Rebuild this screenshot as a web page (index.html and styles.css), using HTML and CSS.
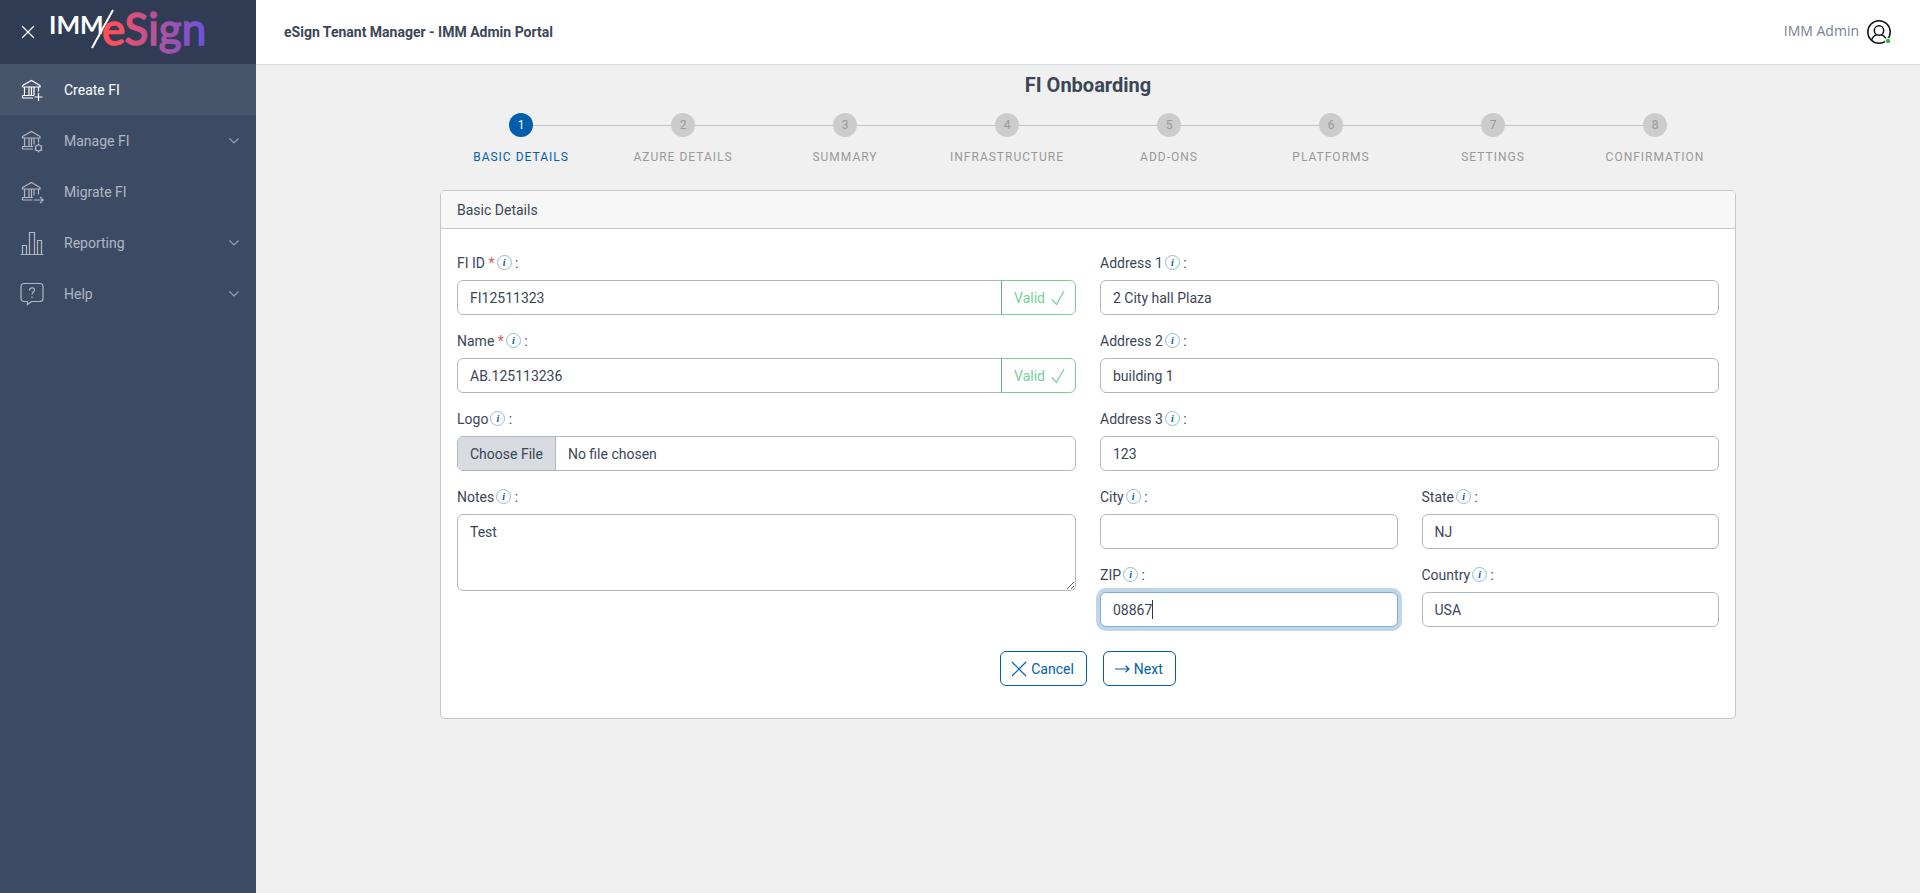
FILE: index.html
```html
<!DOCTYPE html>
<html lang="en">
<head>
	<meta charset="UTF-8" />
	<meta name="viewport" content="width=device-width, initial-scale=1.0" />
	<title>eSign Tenant Manager - IMM Admin Portal</title>
	<link rel="stylesheet" href="styles.css">
</head>
<body>
	<!-- Sidebar -->
	<aside class="sidebar">
		<div class="sidebar-brand">
			<button type="button" class="sidebar-toggle" aria-label="Close menu">
				<svg width="14" height="14" viewBox="0 0 14 14"><path d="M1 1l12 12M13 1L1 13" /></svg>
			</button>
			<svg class="logo" width="170" height="64" viewBox="0 0 170 64">
				<defs>
					<linearGradient id="brand" gradientUnits="userSpaceOnUse" x1="54" y1="0" x2="156" y2="0">
						<stop offset="0.1" stop-color="#ff4f58" />
						<stop offset="0.5" stop-color="#b9529b" />
						<stop offset="1" stop-color="#6a52dc" />
					</linearGradient>
				</defs>
				<text class="logo-imm" x="0" y="34">IMM</text>
				<path class="logo-slash" d="M64 10L43 48" />
				<text class="logo-esign" x="53" y="45" fill="url(#brand)" stroke="url(#brand)">eSign</text>
			</svg>
		</div>
		<nav class="sidebar-nav">
			<a href="#create" class="nav-link active">
				<svg class="nav-icon" viewBox="0 0 24 24">
					<path d="M2.500 7.500L11.500 2.500l8.500 5v1.500h-17.500zM4.500 9.500v8M9 9.500v8M11.500 9.500v8M14 9.500v8M18.500 9.500v4M2.500 17.500h11.500M2.500 20h10.500M2.500 17.500V20M18.500 15v8M14.500 19h8" />
				</svg>
				<span>Create FI</span>
			</a>
			<a href="#manage" class="nav-link">
				<svg class="nav-icon" viewBox="0 0 24 24">
					<path d="M2.500 7.500L11.500 2.500l8.500 5v1.500h-17.500zM4.500 9.500v8M9 9.500v8M11.500 9.500v8M14 9.500v6M18.500 9.500v4M2.500 17.500h10.500M2.500 20h10.500M2.500 17.500V20" />
					<circle cx="18.500" cy="19" r="3" />
					<path d="M18.500 14.500v1.500M18.500 22v1.500M14.600 16.700l1.300.8M21.100 20.500l1.300.8M14.600 21.300l1.300-.8M21.100 17.500l1.300-.8" />
				</svg>
				<span>Manage FI</span>
				<svg class="chevron" viewBox="0 0 12 8"><path d="M1.500 1.500L6 6l4.500-4.500" /></svg>
			</a>
			<a href="#migrate" class="nav-link">
				<svg class="nav-icon" viewBox="0 0 24 24">
					<path d="M2.500 7.500L11.500 2.500l8.500 5v1.500h-17.500zM4.500 9.500v8M9 9.500v8M11.500 9.500v8M14 9.500v6M18.500 9.500v5M2.500 17.500h10.500M2.500 20h10M2.500 17.500V20M14 20h9M20 16.800l3.200 3.200l-3.200 3.200" />
				</svg>
				<span>Migrate FI</span>
			</a>
			<a href="#reporting" class="nav-link">
				<svg class="nav-icon" viewBox="0 0 24 24">
					<path d="M.5 23.500h23M2.500 23.500v-9h4v9M9.500 23.500V1.500h5v22M17.500 23.500v-14h4v14" />
				</svg>
				<span>Reporting</span>
				<svg class="chevron" viewBox="0 0 12 8"><path d="M1.500 1.500L6 6l4.500-4.500" /></svg>
			</a>
			<a href="#help" class="nav-link">
				<svg class="nav-icon" viewBox="0 0 24 24">
					<path d="M4 1.500h16a3 3 0 0 1 3 3v12a3 3 0 0 1-3 3h-8.500L7.500 22.500v-3H4a3 3 0 0 1-3-3v-12a3 3 0 0 1 3-3z" />
					<path d="M9.500 8.500c0-3.500 5-3.500 5-.5 0 2-2.500 2-2.500 4.500M12 14.500v1.500" />
				</svg>
				<span>Help</span>
				<svg class="chevron" viewBox="0 0 12 8"><path d="M1.500 1.500L6 6l4.500-4.500" /></svg>
			</a>
		</nav>
	</aside>

	<div class="wrapper">
		<header class="header">
			<strong class="header-title">eSign Tenant Manager - IMM Admin Portal</strong>
			<div class="user">
				<span>IMM Admin</span>
				<svg class="avatar" width="24" height="24" viewBox="0 0 24 24">
					<circle cx="12" cy="12" r="11.200" />
					<circle cx="12" cy="10.500" r="4.700" />
					<path d="M4.500 20.200c1-3 3-5 5.500-5.500M14 14.700c2 .4 3.600 1.700 4.800 3.800" />
					<circle class="avatar-status" cx="21" cy="21" r="2.800" />
				</svg>
			</div>
		</header>

		<main class="container">
			<h1>FI Onboarding</h1>

			<ol class="stepper">
				<li class="step active"><span class="step-number">1</span><span class="step-label">Basic Details</span></li>
				<li class="step"><span class="step-number">2</span><span class="step-label">Azure Details</span></li>
				<li class="step"><span class="step-number">3</span><span class="step-label">Summary</span></li>
				<li class="step"><span class="step-number">4</span><span class="step-label">Infrastructure</span></li>
				<li class="step"><span class="step-number">5</span><span class="step-label">Add-Ons</span></li>
				<li class="step"><span class="step-number">6</span><span class="step-label">Platforms</span></li>
				<li class="step"><span class="step-number">7</span><span class="step-label">Settings</span></li>
				<li class="step"><span class="step-number">8</span><span class="step-label">Confirmation</span></li>
			</ol>

			<form class="card">
				<div class="card-header">Basic Details</div>
				<div class="card-body">
					<div class="columns">
						<div class="column">
							<div class="field">
								<label for="fi-id">FI ID <span class="required">*</span><i class="info">i</i> :</label>
								<div class="input-group">
									<input class="form-control" type="text" id="fi-id" value="FI12511323">
									<button type="button" class="btn-valid" disabled>Valid
										<svg width="14" height="16" viewBox="0 0 14 16"><path d="M1 9.500l4.500 5L13 1" /></svg>
									</button>
								</div>
							</div>
							<div class="field">
								<label for="name">Name <span class="required">*</span><i class="info">i</i> :</label>
								<div class="input-group">
									<input class="form-control" type="text" id="name" value="AB.125113236">
									<button type="button" class="btn-valid" disabled>Valid
										<svg width="14" height="16" viewBox="0 0 14 16"><path d="M1 9.500l4.500 5L13 1" /></svg>
									</button>
								</div>
							</div>
							<div class="field">
								<label for="logo">Logo<i class="info">i</i> :</label>
								<input class="form-control" type="file" id="logo">
							</div>
							<div class="field">
								<label for="notes">Notes<i class="info">i</i> :</label>
								<textarea class="form-control" id="notes" rows="3">Test</textarea>
							</div>
						</div>

						<div class="column">
							<div class="field">
								<label for="address1">Address 1<i class="info">i</i> :</label>
								<input class="form-control" type="text" id="address1" value="2 City hall Plaza">
							</div>
							<div class="field">
								<label for="address2">Address 2<i class="info">i</i> :</label>
								<input class="form-control" type="text" id="address2" value="building 1">
							</div>
							<div class="field">
								<label for="address3">Address 3<i class="info">i</i> :</label>
								<input class="form-control" type="text" id="address3" value="123">
							</div>
							<div class="columns">
								<div class="field">
									<label for="city">City<i class="info">i</i> :</label>
									<input class="form-control" type="text" id="city">
								</div>
								<div class="field">
									<label for="state">State<i class="info">i</i> :</label>
									<input class="form-control" type="text" id="state" value="NJ">
								</div>
							</div>
							<div class="columns">
								<div class="field">
									<label for="zip">ZIP<i class="info">i</i> :</label>
									<div class="caret-box">
										<input class="form-control focused" type="text" id="zip" value="08867">
										<span class="caret"></span>
									</div>
								</div>
								<div class="field">
									<label for="country">Country<i class="info">i</i> :</label>
									<input class="form-control" type="text" id="country" value="USA">
								</div>
							</div>
						</div>
					</div>

					<div class="actions">
						<button type="button" class="btn">
							<svg width="16" height="16" viewBox="0 0 16 16"><path d="M1 1l14 14M15 1L1 15" /></svg>
							Cancel
						</button>
						<button type="submit" class="btn">
							<svg width="16" height="16" viewBox="0 0 16 16"><path d="M1 8h14M11.500 4.800L15 8l-3.500 3.200" /></svg>
							Next
						</button>
					</div>
				</div>
			</form>
		</main>
	</div>
</body>
</html>
```
FILE: styles.css
```css
* {
	box-sizing: border-box;
}
body {
	margin: 0;
	display: flex;
	min-height: 100vh;
	font-family: Roboto, sans-serif;
	font-size: 14px;
	line-height: 22px;
	color: #3b4657;
	background: #f0f0f0;
}
svg {
	fill: none;
	stroke: currentColor;
	stroke-width: 1.2;
	flex-shrink: 0;
}

/* Sidebar */
.sidebar {
	width: 256px;
	flex-shrink: 0;
	background: #3c4b64;
	color: #fff;
}
.sidebar-brand {
	display: flex;
	align-items: center;
	gap: 14px;
	height: 64px;
	padding-left: 21px;
	background: #303c54;
}
.sidebar-toggle {
	display: flex;
	padding: 0;
	border: none;
	background: none;
	color: #fff;
	cursor: pointer;
}
.logo {
	overflow: visible;
}
.logo text {
	font-family: Lato, sans-serif;
}
.logo-imm {
	font-size: 25px;
	font-weight: 700;
	fill: #fff;
	stroke: none;
}
.logo-esign {
	font-size: 44px;
	stroke-width: 1.5;
}
.logo-slash {
	stroke-width: 2;
}
.nav-link {
	display: flex;
	align-items: center;
	gap: 20px;
	height: 51px;
	padding: 0 16px 0 20px;
	color: #b1b7c1;
	text-decoration: none;
}
.nav-link.active {
	background: #46546c;
	color: #fff;
}
.nav-icon {
	width: 24px;
	height: 24px;
}
.chevron {
	width: 12px;
	height: 8px;
	margin-left: auto;
	color: #98a1b0;
}

/* Header */
.wrapper {
	flex: 1;
	min-width: 0;
}
.header {
	display: flex;
	align-items: center;
	justify-content: space-between;
	height: 65px;
	padding: 0 29px 0 28px;
	background: #fff;
	border-bottom: 1px solid #d8dbe0;
}
.user {
	display: flex;
	align-items: flex-start;
	gap: 8px;
	font-family: "Open Sans", sans-serif;
	color: #768192;
}
.avatar {
	color: #111;
	stroke-width: 1.5;
}
.avatar-status {
	fill: #2eb85c;
	stroke: #fff;
	stroke-width: 1;
}

.container {
	max-width: 1320px;
	margin: 0 auto;
	padding: 8px 12px;
}
h1 {
	margin: 0;
	font-size: 20px;
	line-height: 24px;
	text-align: center;
}

/* Stepper */
.stepper {
	display: flex;
	margin: 16px 0 22px;
	padding: 0;
	list-style: none;
}
.step {
	position: relative;
	flex: 1;
	display: flex;
	flex-direction: column;
	align-items: center;
	gap: 9px;
	font-size: 12px;
	color: #999;
}
.step + .step::before {
	content: "";
	position: absolute;
	top: 12px;
	left: -50%;
	width: 100%;
	height: 1px;
	background: #c4c4c4;
}
.step-number {
	z-index: 1;
	width: 24px;
	height: 24px;
	border-radius: 50%;
	line-height: 25px;
	text-align: center;
	background: #ccc;
}
.step-label {
	letter-spacing: 1px;
	text-transform: uppercase;
}
.step.active {
	color: #005eaa;
}
.step.active .step-number {
	background: #005eaa;
	color: #fff;
}

/* Form */
.card {
	background: #fff;
	border: 1px solid #c8c8c8;
	border-radius: 5px;
}
.card-header {
	padding: 8px 16px 7px;
	background: #f7f7f7;
	border-bottom: 1px solid #c8c8c8;
	border-radius: 4px 4px 0 0;
}
.card-body {
	padding: 24px 16px 32px;
}
.columns {
	display: grid;
	grid-template-columns: 1fr 1fr;
	gap: 24px;
}
.column {
	display: flex;
	flex-direction: column;
	gap: 16px;
}
.field {
	display: flex;
	flex-direction: column;
	gap: 6px;
	min-width: 0;
}
label {
	height: 21px;
	line-height: 21px;
	white-space: nowrap;
}
.required {
	color: #e55353;
}
.info {
	display: inline-block;
	width: 15px;
	height: 15px;
	margin-left: 2px;
	border: 1px solid #93bbd2;
	border-radius: 50%;
	font: italic bold 10px/13px "Liberation Serif", serif;
	text-align: center;
	vertical-align: 2px;
	color: #005eaa;
}
.form-control {
	width: 100%;
	min-width: 0;
	height: 35px;
	padding: 6px 12px;
	border: 1px solid #b1b7c1;
	border-radius: 6px;
	background: #fff;
	font: inherit;
	color: inherit;
	outline: none;
}
textarea.form-control {
	display: block;
	height: 77px;
	resize: vertical;
}
.form-control::file-selector-button {
	height: 34px;
	margin: -6px 12px -6px -12px;
	padding: 6px 12px;
	border: 0 solid #b1b7c1;
	border-right-width: 1px;
	background: #d8dbe0;
	font: inherit;
	color: inherit;
}
.form-control[type="file"] {
	overflow: hidden;
}
.form-control.focused {
	border-color: #80aed4;
	box-shadow: 0 0 0 4px #bfd6e9;
}
.caret-box {
	position: relative;
}
.caret {
	position: absolute;
	top: 8px;
	left: 52px;
	width: 1px;
	height: 19px;
	background: #2c384a;
}
.input-group {
	display: flex;
}
.input-group .form-control {
	border-radius: 6px 0 0 6px;
}
.btn-valid {
	display: flex;
	align-items: center;
	gap: 6px;
	margin-left: -1px;
	padding: 1px 10px 0 12px;
	border: 1px solid #2eb85c;
	border-radius: 0 6px 6px 0;
	background: none;
	font: inherit;
	color: #2eb85c;
	opacity: 0.65;
}
.actions {
	display: flex;
	justify-content: center;
	gap: 16px;
	margin-top: 24px;
}
.btn {
	display: flex;
	align-items: center;
	gap: 4px;
	height: 35px;
	padding: 1px 12px 0 10px;
	border: 1px solid #005eaa;
	border-radius: 6px;
	background: #fff;
	font: inherit;
	color: #005eaa;
	cursor: pointer;
}
```
